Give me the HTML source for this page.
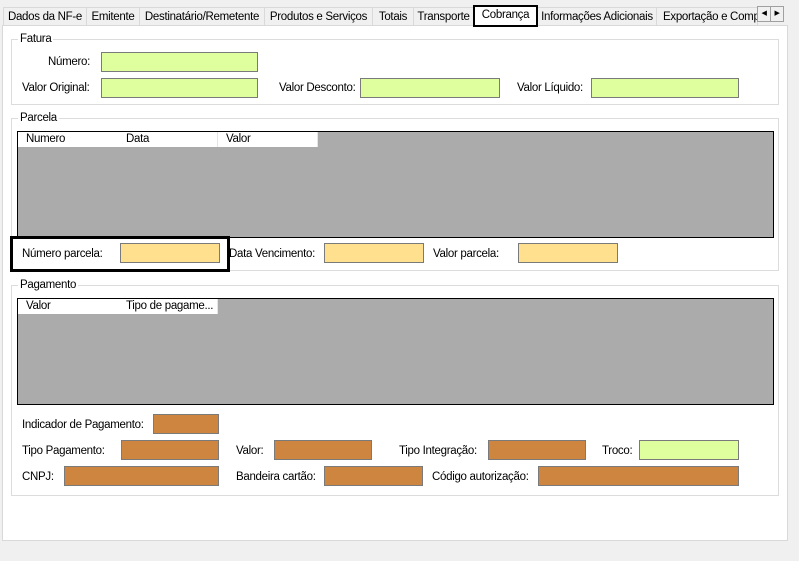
<!DOCTYPE html><html><head><meta charset="utf-8"><style>
*{box-sizing:border-box;margin:0;padding:0}
body{width:799px;height:561px;background:#f0f0f0;position:relative;overflow:hidden;font-family:"Liberation Sans",sans-serif;font-size:11.5px;color:#000;letter-spacing:-0.3px}
.a{position:absolute;white-space:nowrap}
.tab{position:absolute;top:7px;height:19px;border:1px solid #d9d9d9;border-bottom:none;background:#f0f0f0;line-height:18px;text-align:center;white-space:nowrap}
.panel{position:absolute;left:2px;top:25px;width:786px;height:516px;background:#fff;border:1px solid #d9d9d9}
.grp{position:absolute;border:1px solid #dcdcdc}
.leg{position:absolute;background:#fff;padding:0 2px;line-height:13px}
.in{position:absolute;border:1px solid #7a7a7a;height:20px}
.g{background:#dfff9f}.y{background:#ffe08f}.o{background:#cd853f}
.grid{position:absolute;background:#ababab;border:1px solid #000}
.hd{position:absolute;top:0;height:15px;background:#fff;line-height:15px;padding-left:8px;border-right:1px solid #e5e5e5}
</style></head><body>
<div class="tab" style="left:3px;width:84px">Dados da NF-e</div>
<div class="tab" style="left:86px;width:54px">Emitente</div>
<div class="tab" style="left:139px;width:126px">Destinatário/Remetente</div>
<div class="tab" style="left:264px;width:109px">Produtos e Serviços</div>
<div class="tab" style="left:372px;width:42px">Totais</div>
<div class="tab" style="left:413px;width:61px">Transporte</div>
<div class="tab" style="left:537px;width:120px">Informações Adicionais</div>
<div class="tab" style="left:656px;width:102px;overflow:hidden;text-align:left;padding-left:6px">Exportação e Compra</div>
<div class="a" style="left:757px;top:6px;width:14px;height:16px;border:1px solid #a0a0a0;background:#f0f0f0;font-size:7px;line-height:14px;text-align:center">◀</div>
<div class="a" style="left:770px;top:6px;width:14px;height:16px;border:1px solid #a0a0a0;background:#f0f0f0;font-size:7px;line-height:14px;text-align:center">▶</div>
<div class="panel"></div>
<div class="a" style="left:473px;top:5px;width:65px;height:22px;border:2px solid #000;background:#fff;line-height:16px;text-align:center">Cobrança</div>

<div class="grp" style="left:11px;top:39px;width:768px;height:66px"></div>
<div class="leg" style="left:18px;top:33px">Fatura</div>
<div class="a" style="left:48px;top:56px">Número:</div><div class="in g" style="left:101px;top:52px;width:157px"></div>
<div class="a" style="left:22px;top:82px">Valor Original:</div><div class="in g" style="left:101px;top:78px;width:157px"></div>
<div class="a" style="left:279px;top:82px">Valor Desconto:</div><div class="in g" style="left:360px;top:78px;width:140px"></div>
<div class="a" style="left:517px;top:82px">Valor Líquido:</div><div class="in g" style="left:591px;top:78px;width:148px"></div>

<div class="grp" style="left:11px;top:118px;width:768px;height:153px"></div>
<div class="leg" style="left:18px;top:112px">Parcela</div>
<div class="grid" style="left:17px;top:131px;width:757px;height:107px">
<div class="hd" style="left:0;width:101px">Numero</div><div class="hd" style="left:100px;width:100px">Data</div><div class="hd" style="left:200px;width:100px">Valor</div></div>
<div class="a" style="left:10px;top:236px;width:220px;height:36px;border:3px solid #000"></div>
<div class="a" style="left:22px;top:248px">Número parcela:</div><div class="in y" style="left:120px;top:243px;width:100px"></div>
<div class="a" style="left:229px;top:248px">Data Vencimento:</div><div class="in y" style="left:324px;top:243px;width:100px"></div>
<div class="a" style="left:433px;top:248px">Valor parcela:</div><div class="in y" style="left:518px;top:243px;width:100px"></div>

<div class="grp" style="left:11px;top:285px;width:768px;height:211px"></div>
<div class="leg" style="left:18px;top:279px">Pagamento</div>
<div class="grid" style="left:17px;top:298px;width:757px;height:107px">
<div class="hd" style="left:0;width:101px">Valor</div><div class="hd" style="left:100px;width:100px">Tipo de pagame...</div></div>
<div class="a" style="left:22px;top:419px">Indicador de Pagamento:</div><div class="in o" style="left:153px;top:414px;width:66px"></div>
<div class="a" style="left:22px;top:445px">Tipo Pagamento:</div><div class="in o" style="left:121px;top:440px;width:98px"></div>
<div class="a" style="left:236px;top:445px">Valor:</div><div class="in o" style="left:274px;top:440px;width:98px"></div>
<div class="a" style="left:399px;top:445px">Tipo Integração:</div><div class="in o" style="left:488px;top:440px;width:98px"></div>
<div class="a" style="left:602px;top:445px">Troco:</div><div class="in g" style="left:639px;top:440px;width:100px"></div>
<div class="a" style="left:22px;top:471px">CNPJ:</div><div class="in o" style="left:64px;top:466px;width:155px"></div>
<div class="a" style="left:236px;top:471px">Bandeira cartão:</div><div class="in o" style="left:324px;top:466px;width:99px"></div>
<div class="a" style="left:432px;top:471px">Código autorização:</div><div class="in o" style="left:538px;top:466px;width:201px"></div>
</body></html>
